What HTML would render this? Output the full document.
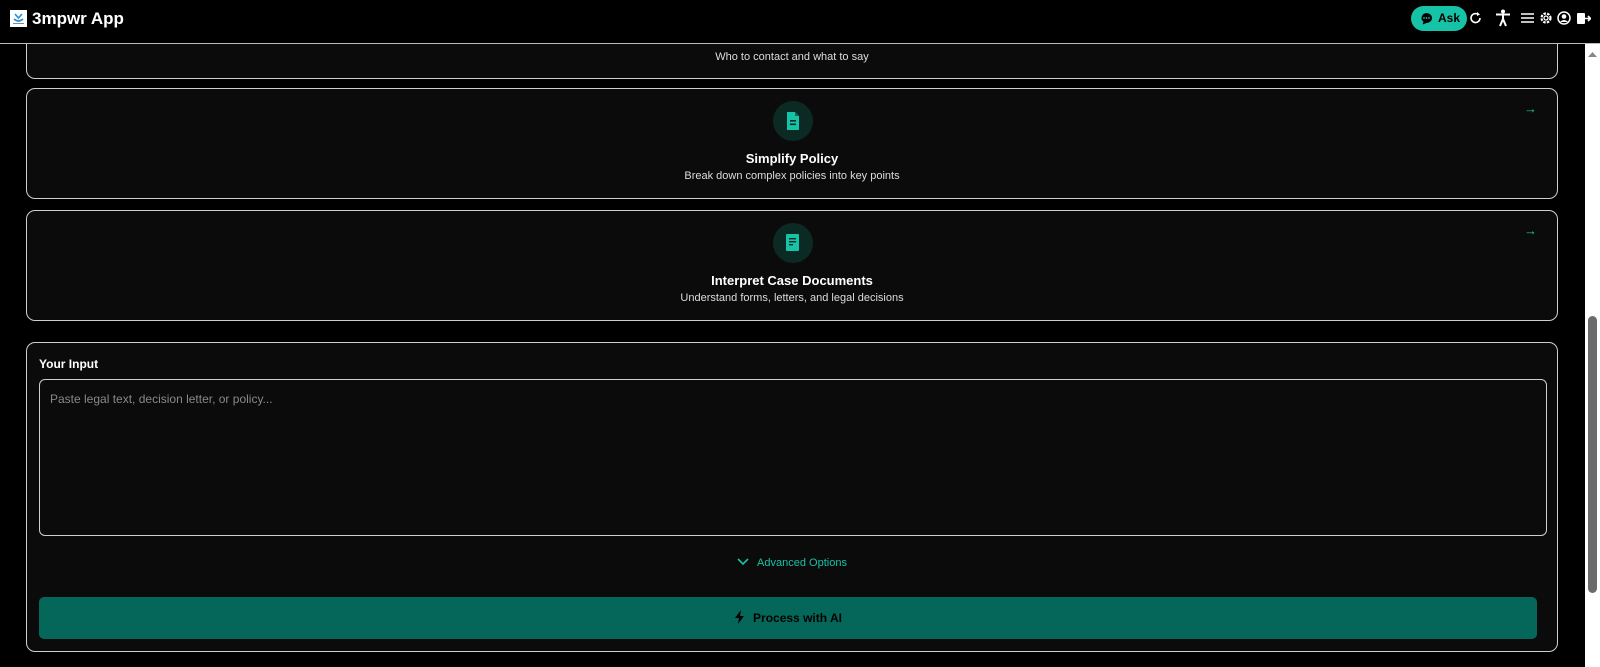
<!DOCTYPE html>
<html><head><meta charset="utf-8"><style>
*{box-sizing:border-box;margin:0;padding:0}
html,body{width:1600px;height:667px;overflow:hidden;background:#000;font-family:"Liberation Sans",sans-serif;color:#fff}
.hdr{position:absolute;left:0;top:0;width:1600px;height:44px;background:#000;border-bottom:1px solid #bbb;z-index:10}
.logo{position:absolute;left:10px;top:10px;width:17px;height:17px;background:#fff}
.title{position:absolute;left:32px;top:9px;font-size:17px;font-weight:bold}
.card{position:absolute;left:26px;width:1532px;background:#0b0b0b;border:1px solid #cfcfcf;border-radius:9px;text-align:center}
.ic{position:absolute;left:746px;width:40px;height:40px;border-radius:50%;background:#0c2a24}
.ct{position:absolute;left:0;width:100%;font-size:13px;font-weight:bold}
.cs{position:absolute;left:0;width:100%;font-size:11px;color:#ddd}
.arr{position:absolute;right:20px;top:12px;color:#17c3a6;font-size:13px}
.sb{position:absolute;left:1585px;top:44px;width:15px;height:623px;background:#fff}
.thumb{position:absolute;left:1588px;top:316px;width:9px;height:277px;background:#6b6b6b;border-radius:5px}
</style></head><body>
<div class="hdr">
<div class="logo"><svg width="17" height="17"><path d="M5 4 L8.5 8 L12 4 M4 9 Q8.5 13 13 9" stroke="#2a8fd8" stroke-width="1.6" fill="none"/><rect x="3" y="13" width="11" height="1" fill="#888"/></svg></div>
<div class="title">3mpwr App</div>
<div style="position:absolute;left:1411px;top:6px;width:56px;height:25px;border-radius:13px;background:#17c3a6;color:#000;font-size:12px;font-weight:bold;line-height:25px;padding-left:27px">Ask
<svg style="position:absolute;left:9px;top:6px" width="13" height="13"><path d="M6.5 1a5.5 5 0 1 1 0 10l-4 1.5 1-2.7A5.5 5 0 0 1 6.5 1z" fill="#000"/><circle cx="4" cy="6" r=".9" fill="#17c3a6"/><circle cx="6.5" cy="6" r=".9" fill="#17c3a6"/><circle cx="9" cy="6" r=".9" fill="#17c3a6"/></svg></div>
<svg style="position:absolute;left:1469px;top:11px" width="14" height="14"><path d="M11 7a4.5 4.5 0 1 1-2-3.7" stroke="#fff" stroke-width="1.6" fill="none"/><path d="M8 1l3 2.5-3 1.5z" fill="#fff"/></svg>
<svg style="position:absolute;left:1495px;top:9px" width="16" height="18"><circle cx="8" cy="2.5" r="2" fill="#fff"/><path d="M1 5.5h14M8 5.5v5M8 10l-3 7M8 10l3 7" stroke="#fff" stroke-width="2" fill="none"/></svg>
<svg style="position:absolute;left:1521px;top:12px" width="13" height="12"><path d="M0 2h13M0 6h13M0 10h13" stroke="#fff" stroke-width="1.6"/></svg>
<svg style="position:absolute;left:1539px;top:11px" width="14" height="14"><circle cx="7" cy="7" r="4.5" stroke="#fff" stroke-width="2.2" fill="none" stroke-dasharray="2.5 1.2"/><circle cx="7" cy="7" r="2" stroke="#fff" stroke-width="1.3" fill="none"/></svg>
<svg style="position:absolute;left:1557px;top:11px" width="14" height="14"><circle cx="7" cy="7" r="6" stroke="#fff" stroke-width="1.5" fill="none"/><circle cx="7" cy="5.5" r="2.3" fill="#fff"/><path d="M3 11q4-4 8 0" fill="#fff"/></svg>
<svg style="position:absolute;left:1577px;top:12px" width="14" height="13"><rect x="0" y="1" width="8" height="11" rx="1" fill="#fff"/><path d="M7 6.5h6M11 4l2.5 2.5L11 9" stroke="#fff" stroke-width="1.6" fill="none"/></svg>
</div>
<div class="card" style="top:30px;height:49px"><div class="cs" style="top:20px">Who to contact and what to say</div></div>
<div class="card" style="top:88px;height:111px">
<div class="arr">→</div>
<div class="ic" style="top:12px"><svg style="position:absolute;left:13px;top:11px" width="14" height="18"><path d="M1 0h8l4 4v14H1z" fill="#17c3a6"/><path d="M9 0v4h4" fill="#0c6b5c"/><rect x="4" y="8" width="6" height="1.6" fill="#0c2a24"/><rect x="4" y="11.5" width="6" height="1.6" fill="#0c2a24"/></svg></div>
<div class="ct" style="top:62px">Simplify Policy</div>
<div class="cs" style="top:81px">Break down complex policies into key points</div></div>
<div class="card" style="top:210px;height:111px">
<div class="arr">→</div>
<div class="ic" style="top:12px"><svg style="position:absolute;left:13px;top:11px" width="14" height="18"><rect x="0" y="0" width="13" height="17" rx="1" fill="#17c3a6"/><rect x="3" y="4" width="7" height="1.4" fill="#0c2a24"/><rect x="3" y="7" width="7" height="1.4" fill="#0c2a24"/><rect x="3" y="10" width="4" height="1.4" fill="#0c2a24"/></svg></div>
<div class="ct" style="top:62px">Interpret Case Documents</div>
<div class="cs" style="top:81px">Understand forms, letters, and legal decisions</div></div>
<div class="card" style="top:342px;height:310px;text-align:left">
<div style="position:absolute;left:12px;top:14px;font-size:12px;font-weight:bold">Your Input</div>
<div style="position:absolute;left:12px;top:36px;width:1508px;height:157px;border:1px solid #cfcfcf;border-radius:6px;padding:12px 10px;font-size:12px;color:#888">Paste legal text, decision letter, or policy...</div>
<div style="position:absolute;left:0;top:214px;width:100%;text-align:center;font-size:11px;color:#17c3a6"><svg width="12" height="8" style="margin-right:8px"><path d="M1 1l5 5 5-5" stroke="#17c3a6" stroke-width="1.6" fill="none"/></svg>Advanced Options</div>
<div style="position:absolute;left:12px;top:254px;width:1498px;height:42px;border-radius:5px;background:#05665a;text-align:center;line-height:42px;font-size:12px;font-weight:bold;color:#000"><svg width="11" height="14" style="margin-right:8px;vertical-align:-2px"><path d="M7 0L1 8h4l-1 6 6-8H6z" fill="#000"/></svg>Process with AI</div>
</div>
<div class="sb"></div><div class="thumb"></div>
<svg style="position:absolute;left:1588px;top:52px" width="9" height="6"><path d="M0 5l4.5-5 4.5 5z" fill="#888"/></svg>
</body></html>
